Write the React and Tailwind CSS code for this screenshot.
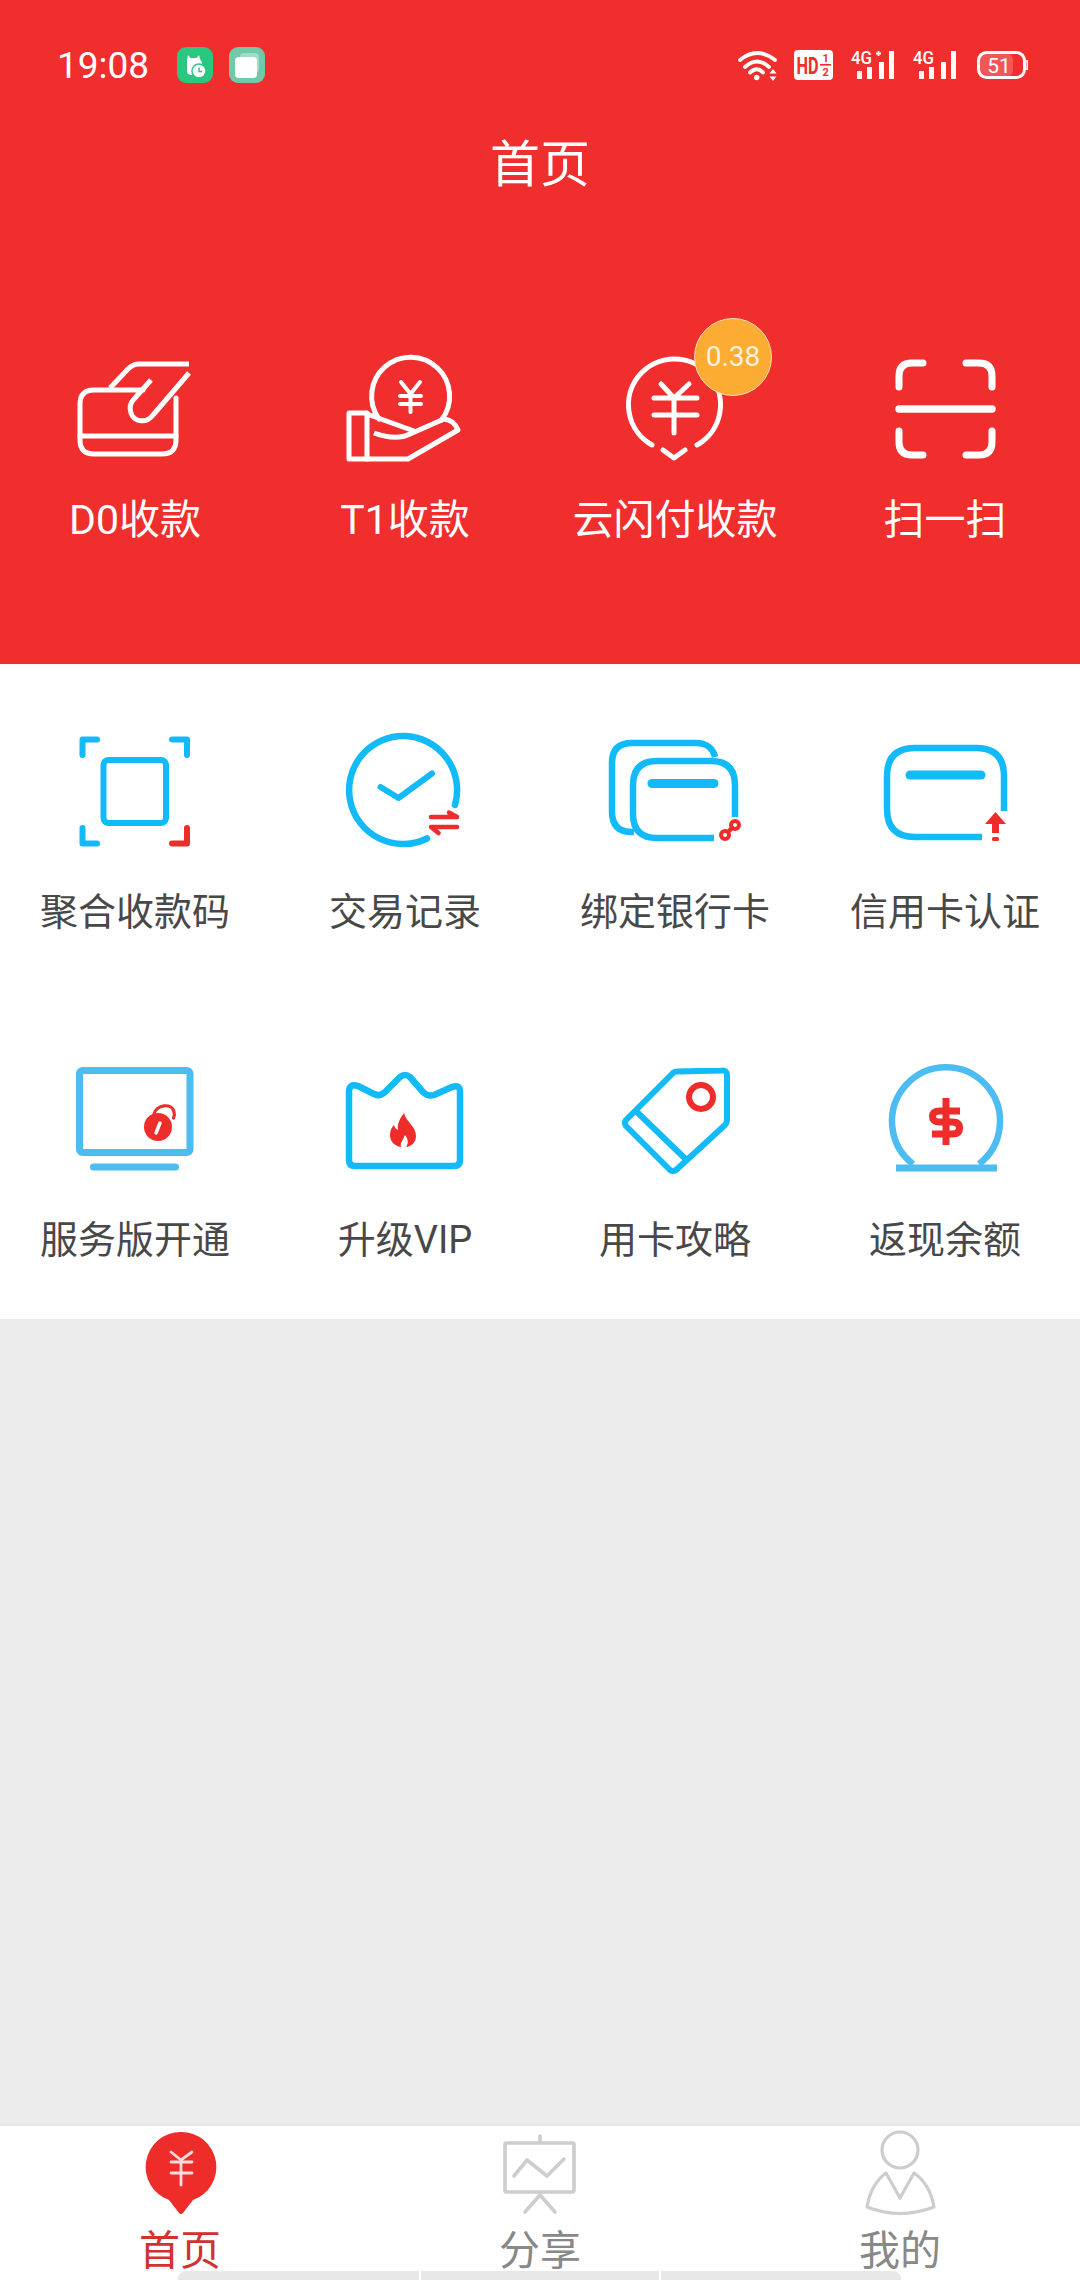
const font = { fontFamily: "Roboto, 'Noto Sans CJK SC', sans-serif" };
const BLUE = "#12baf8";
const SKY = "#4dbcf1";
const RED = "#ee2d2b";
const GREY = "#cdcdcd";

// viewBox takes page coordinates, so each icon is drawn where it sits in the picture
const Box = ({ view, children }) => (
  <svg viewBox={view} className="w-[160px] h-[130px]" fill="none" strokeLinecap="round" strokeLinejoin="round">
    {children}
  </svg>
);

// Status bar
const Wifi = () => (
  <svg viewBox="738 50 40 31" className="w-[40px] h-[31px]" fill="none" stroke="white" strokeWidth="3.8" strokeLinecap="round">
    <path d="M740 60 Q757 46 775 60" />
    <path d="M745 67 Q757 56 769 67" />
    <path d="M750 72.5 Q757 66 763 72.5" />
    <circle cx="756.7" cy="77.5" r="2.8" fill="white" stroke="none" />
    <path d="M773 69 L776.5 73.5 H769.5 Z M773 81 L776.5 76.5 H769.5 Z" fill="white" stroke="none" />
  </svg>
);

const Hd = () => (
  <svg viewBox="794 51 39 30" className="w-[39px] h-[30px]">
    <rect x="794" y="51" width="39" height="30" rx="4" fill="white" />
    <g transform="translate(796.5 75) scale(0.68 1)">
      <text fill={RED} fontSize="24" fontWeight="700" style={font}>HD</text>
    </g>
    <text x="822.5" y="63" fill={RED} fontSize="11" fontWeight="700" style={font}>1</text>
    <rect x="820" y="65" width="11" height="1.6" fill={RED} />
    <text x="822.5" y="77" fill={RED} fontSize="11" fontWeight="700" style={font}>2</text>
  </svg>
);

const Signal = ({ plus }) => (
  <svg viewBox="0 -5 44 35" className="w-[44px] h-[35px] -mt-[5px]" fill="white">
    <text x="0" y="14" fontSize="18" fontWeight="500" textLength="21" lengthAdjust="spacingAndGlyphs" style={font}>4G</text>
    {plus && <path d="M25 3.5 H30 M27.5 1 V6" stroke="white" strokeWidth="1.8" />}
    <rect x="6" y="21" width="5" height="8" />
    <rect x="16" y="17" width="5" height="12" />
    <rect x="28" y="12" width="5" height="17" />
    <rect x="38" y="1" width="5" height="28" />
  </svg>
);

const Battery = () => (
  <svg viewBox="0 0 51 28" className="w-[51px] h-[28px]">
    <rect x="2" y="2" width="34" height="24" rx="7" fill="white" fillOpacity="0.2" />
    <rect x="1.5" y="1.5" width="46" height="25" rx="8" fill="none" stroke="white" strokeWidth="3" />
    <path d="M50 9 Q51 14 50 19" fill="none" stroke="white" strokeWidth="2" />
    <text x="22" y="21.5" textAnchor="middle" fill="white" fontSize="21" style={font}>51</text>
  </svg>
);

const StatusBar = () => (
  <div className="flex items-center h-[50px] pl-[57px] pr-[52px]">
    <span className="w-[96px] text-[37px] font-normal text-white leading-none">19:08</span>
    <div className="ml-[24px] w-[36px] h-[36px] rounded-[9px] bg-[#2bc680]">
      <svg viewBox="0 0 36 36" className="w-[36px] h-[36px]">
        <path d="M11 8 L13.5 11 H19.5 L22 8 L23 12 Q25 14 25 18 V28 H15 Q10 28 10 24 V13 Z" fill="white" />
        <circle cx="22" cy="24" r="7" fill="white" stroke="#2bc680" strokeWidth="1.5" />
        <path d="M22 20.5 V24.5 H25" fill="none" stroke="#2bc680" strokeWidth="1.5" />
      </svg>
    </div>
    <div className="ml-[16px] w-[36px] h-[36px] rounded-[9px] bg-[#70c9a9]">
      <svg viewBox="0 0 36 36" className="w-[36px] h-[36px]">
        <rect x="11" y="6" width="19" height="20" rx="4" fill="white" fillOpacity="0.35" />
        <rect x="6" y="10" width="22" height="21" rx="4" fill="white" />
      </svg>
    </div>
    <div className="ml-auto flex items-center">
      <Wifi />
      <div className="ml-[16px]"><Hd /></div>
      <div className="ml-[18px]"><Signal plus /></div>
      <div className="ml-[18px]"><Signal /></div>
      <div className="ml-[20px]"><Battery /></div>
    </div>
  </div>
);

// Red row icons
const CardIcon = () => (
  <Box view="55 345 160 130">
    <g stroke="white" strokeWidth="5">
      <path d="M143 390 H94 Q80 390 80 404 V440 Q80 454 94 454 H162 Q176 454 176 440 V398" />
      <path d="M80 436 H176" />
      <path d="M110 388 L128 369 Q133 364 139 364 H189" strokeLinecap="butt" />
      <path d="M189 373 L153 415 C146 424 134 422 131 413 C129 407 131 402 134 399 L151 380" strokeLinecap="butt" />
    </g>
  </Box>
);

const CoinIcon = () => (
  <Box view="325 345 160 130">
    <g stroke="white" strokeWidth="5">
      <path d="M379 419 A39 39 0 1 1 441.5 420" />
      <path d="M367 413 H349 V459 H408 L458 430 Q454 420 444 419 L410 434 Q396 441 374 433" strokeLinecap="butt" />
      <path d="M367 413 V459" />
      <path d="M367 414 L414 431" />
      <path d="M401 382 L410.5 394 L420 382 M400 396 H421 M400 404 H421 M410.5 394 V412" strokeWidth="4" />
    </g>
  </Box>
);

const UnionIcon = () => (
  <Box view="595 345 160 130">
    <g stroke="white" strokeWidth="5">
      <path d="M652 445 A46 46 0 1 1 697 445" />
      <path d="M663 450 L674 458 L685 450" />
      <path d="M661 384 L674 398 L689 384 M654 398 H697 M654 415 H697 M674 398 V433" />
    </g>
  </Box>
);

const ScanIcon = () => (
  <Box view="865 345 160 130">
    <g stroke="white" strokeWidth="7">
      <path d="M899 387 V376 Q899 363 912 363 H923" />
      <path d="M966 363 H979 Q992 363 992 376 V387" />
      <path d="M899 431 V442 Q899 455 912 455 H923" />
      <path d="M966 455 H979 Q992 455 992 442 V431" />
      <path d="M899 409 H992" strokeWidth="7.5" />
    </g>
  </Box>
);

// Service grid icons
const QrIcon = () => (
  <Box view="55 725 160 130">
    <g stroke={BLUE} strokeWidth="6">
      <path d="M82.5 755 V739.5 H97" />
      <path d="M172 739.5 H187 V755" />
      <path d="M82.5 828 V843.5 H97" />
      <path d="M172 843.5 H187 V828" stroke={RED} />
      <rect x="103.5" y="760" width="62.5" height="63" rx="5" />
    </g>
  </Box>
);

const RecordIcon = () => (
  <Box view="325 725 160 130">
    <path d="M455 805 A54 54 0 1 0 427 838.5" stroke={BLUE} strokeWidth="6.5" />
    <path d="M380.5 787 L398.5 798 L432 773.5" stroke={BLUE} strokeWidth="6" />
    <path d="M431 817 H457 L449 812.5 M457 827 H431 L438.5 833" stroke={RED} strokeWidth="4.5" />
  </Box>
);

const BindIcon = () => (
  <Box view="595 725 160 130">
    <g stroke={BLUE} strokeWidth="6.5">
      <path d="M715 757 C713 748 706 743 696 743 H632 Q612 743 612 763 V812 Q612 832 632 832 H634" strokeLinecap="butt" />
      <path d="M735 817 V785 Q735 761 711 761 H657 Q633 761 633 785 V814 Q633 838 657 838 H714" strokeLinecap="butt" />
      <path d="M652 783.5 H714" strokeWidth="9" />
    </g>
    <g stroke={RED} strokeWidth="4">
      <circle cx="725" cy="835" r="4" />
      <circle cx="735" cy="825" r="4" />
      <path d="M729 831 L732 828" strokeWidth="4.5" />
    </g>
  </Box>
);

const CreditIcon = () => (
  <Box view="865 725 160 130">
    <g stroke={BLUE} strokeWidth="6.5">
      <path d="M1004 811 V776 Q1004 748 976 748 H915 Q887 748 887 776 V809 Q887 837 915 837 H982" strokeLinecap="butt" />
      <path d="M910 775 H981" strokeWidth="9" />
    </g>
    <path d="M995.5 812 L1006 824 H999 V833 H992 V824 H985 Z" fill={RED} />
    <rect x="992" y="837" width="7" height="4" rx="1.5" fill={RED} />
  </Box>
);

const MonitorIcon = () => (
  <Box view="55 1053 160 130">
    <g stroke={SKY} strokeWidth="7">
      <rect x="79.5" y="1070.5" width="110.5" height="82" rx="3" />
      <path d="M93.5 1167 H175.5" />
    </g>
    <circle cx="158" cy="1127" r="14" fill={RED} />
    <path d="M154 1114 C156 1105 172 1102 174 1112 Q175 1115 173.5 1118" stroke={RED} strokeWidth="3.2" />
    <path d="M156 1133 L160 1123" stroke="white" strokeWidth="3.5" />
  </Box>
);

const CrownIcon = () => (
  <Box view="325 1053 160 130">
    <path d="M349 1092 Q349 1083 358 1086 L374 1094 Q380 1097 385 1092 L400 1077 Q405 1073 410 1077 L423 1092 Q428 1097 434 1095 L452 1087 Q460 1084 460 1092 V1160 Q460 1166 454 1166 H355 Q349 1166 349 1160 Z" stroke={BLUE} strokeWidth="6.5" />
    <path d="M404 1113 C406 1122 416 1126 416 1136 C416 1143 410 1147 406 1147 C409 1143 408 1139 405 1135 C403 1140 400 1143 401 1147 C395 1146 390 1142 390 1135 C390 1130 392 1127 394 1125 C395 1128 396 1129 398 1130 C397 1124 400 1118 404 1113 Z" fill={RED} />
  </Box>
);

const TagIcon = () => (
  <Box view="595 1053 160 130">
    <g stroke={BLUE} strokeWidth="6">
      <path d="M672 1074 Q674 1071.5 677 1071.5 L722 1070.5 Q727 1070 727 1075 V1120 Q727 1123 725 1125 L676 1170 Q673 1172 670 1170 L626 1126 Q624 1123 626 1120 Z" />
      <path d="M638 1113 L684.5 1158" />
    </g>
    <circle cx="701" cy="1097" r="12" stroke={RED} strokeWidth="6" />
  </Box>
);

const CashIcon = () => (
  <Box view="865 1053 160 130">
    <path d="M913 1164 A54 54 0 1 1 979 1164" stroke={SKY} strokeWidth="6.5" strokeLinecap="butt" />
    <path d="M896 1168 H997" stroke={SKY} strokeWidth="7" strokeLinecap="butt" />
    <g stroke={RED} strokeWidth="7" strokeLinecap="butt">
      <path d="M960 1111 H940 Q932.5 1111 932.5 1116.5 Q932.5 1122 940 1122 H952 Q959.5 1122 959.5 1128 Q959.5 1134 952 1134 H932" />
      <path d="M946 1098 V1145" />
    </g>
  </Box>
);

// Bottom nav icons
const NavHome = () => (
  <svg viewBox="140 2128 80 90" className="w-[80px] h-[90px]" fill="none" strokeLinecap="round">
    <path d="M181 2132 A35 35 0 0 1 193 2200 L183 2213 Q181 2215 179 2213 L169 2200 A35 35 0 0 1 181 2132 Z" fill={RED} />
    <path d="M171 2152 L181 2160 L192 2152 M171 2162 H192 M171 2173 H192 M181 2160 V2185" stroke="#f9dcdc" strokeWidth="2.8" />
  </svg>
);

const NavShare = () => (
  <svg viewBox="500 2128 80 90" className="w-[80px] h-[90px]" fill="none" stroke={GREY} strokeWidth="3.6" strokeLinecap="round" strokeLinejoin="round">
    <path d="M540 2136 V2142" />
    <rect x="505" y="2143" width="69" height="49" rx="1.5" />
    <path d="M514 2176 L527 2160 L547 2176 L564 2159" />
    <path d="M540 2195 L525 2212 M540 2195 L555 2212" />
  </svg>
);

const NavUser = () => (
  <svg viewBox="861 2128 80 90" className="w-[80px] h-[90px]" fill="none" stroke={GREY} strokeWidth="3.2" strokeLinejoin="round">
    <circle cx="901" cy="2150" r="18" />
    <path d="M887 2173 L901 2198 L915 2173 Q931 2184 935 2207 Q901 2220 868 2207 Q872 2184 887 2173 Z" />
  </svg>
);

const headerItems = [
  { label: "D0收款", Icon: CardIcon },
  { label: "T1收款", Icon: CoinIcon },
  { label: "云闪付收款", Icon: UnionIcon, badge: "0.38" },
  { label: "扫一扫", Icon: ScanIcon },
];

const serviceItems = [
  { label: "聚合收款码", Icon: QrIcon },
  { label: "交易记录", Icon: RecordIcon },
  { label: "绑定银行卡", Icon: BindIcon },
  { label: "信用卡认证", Icon: CreditIcon },
  { label: "服务版开通", Icon: MonitorIcon },
  { label: "升级VIP", Icon: CrownIcon },
  { label: "用卡攻略", Icon: TagIcon },
  { label: "返现余额", Icon: CashIcon },
];

const navItems = [
  { label: "首页", Icon: NavHome, color: "text-[#d2322f]" },
  { label: "分享", Icon: NavShare, color: "text-[#888888]" },
  { label: "我的", Icon: NavUser, color: "text-[#888888]" },
];

export default function App() {
  return (
    <div className="w-[1080px] h-[2280px] flex flex-col bg-[#ececec] overflow-hidden" style={font}>
      <header className="h-[664px] bg-[#ef2e2d] pt-[40px] shrink-0">
        <StatusBar />
        <h1 className="mt-[45px] h-[60px] leading-[60px] text-center text-[50px] font-normal text-white">首页</h1>
        <div className="mt-[150px] grid grid-cols-4">
          {headerItems.map(({ label, Icon, badge }) => (
            <div key={label} className="relative flex flex-col items-center">
              <Icon />
              {badge && (
                <span className="absolute left-[154px] top-[-27px] w-[78px] h-[78px] flex items-center justify-center rounded-full bg-[#fcab33] border-[1.5px] border-[#fde3b5] text-[28px] text-[#fff3dc]">
                  {badge}
                </span>
              )}
              <span className="mt-[22px] h-[46px] leading-[46px] text-[41px] text-white whitespace-nowrap">{label}</span>
            </div>
          ))}
        </div>
      </header>

      <section className="h-[655px] shrink-0 bg-white pt-[61px] grid grid-cols-4 auto-rows-[328px]">
        {serviceItems.map(({ label, Icon }) => (
          <div key={label} className="flex flex-col items-center">
            <Icon />
            <span className="mt-[34px] h-[46px] leading-[46px] text-[38px] text-[#484848] whitespace-nowrap">{label}</span>
          </div>
        ))}
      </section>

      <div className="flex-1" />

      <nav className="h-[156px] shrink-0 bg-white border-t-[2px] border-[#e8e8e8] flex flex-col">
        <div className="grid grid-cols-3 h-[145px] pt-[2px]">
          {navItems.map(({ label, Icon, color }) => (
            <div key={label} className="flex flex-col items-center">
              <Icon />
              <span className={`mt-[13px] h-[40px] leading-[40px] text-[41px] whitespace-nowrap ${color}`}>{label}</span>
            </div>
          ))}
        </div>
        <div className="ml-[178px] w-[723px] h-[9px] flex gap-[2px]">
          <div className="w-[241px] bg-[#e8e8e8] rounded-tl-[8px]" />
          <div className="w-[238px] bg-[#e8e8e8]" />
          <div className="flex-1 bg-[#e8e8e8] rounded-tr-[8px]" />
        </div>
      </nav>
    </div>
  );
}
